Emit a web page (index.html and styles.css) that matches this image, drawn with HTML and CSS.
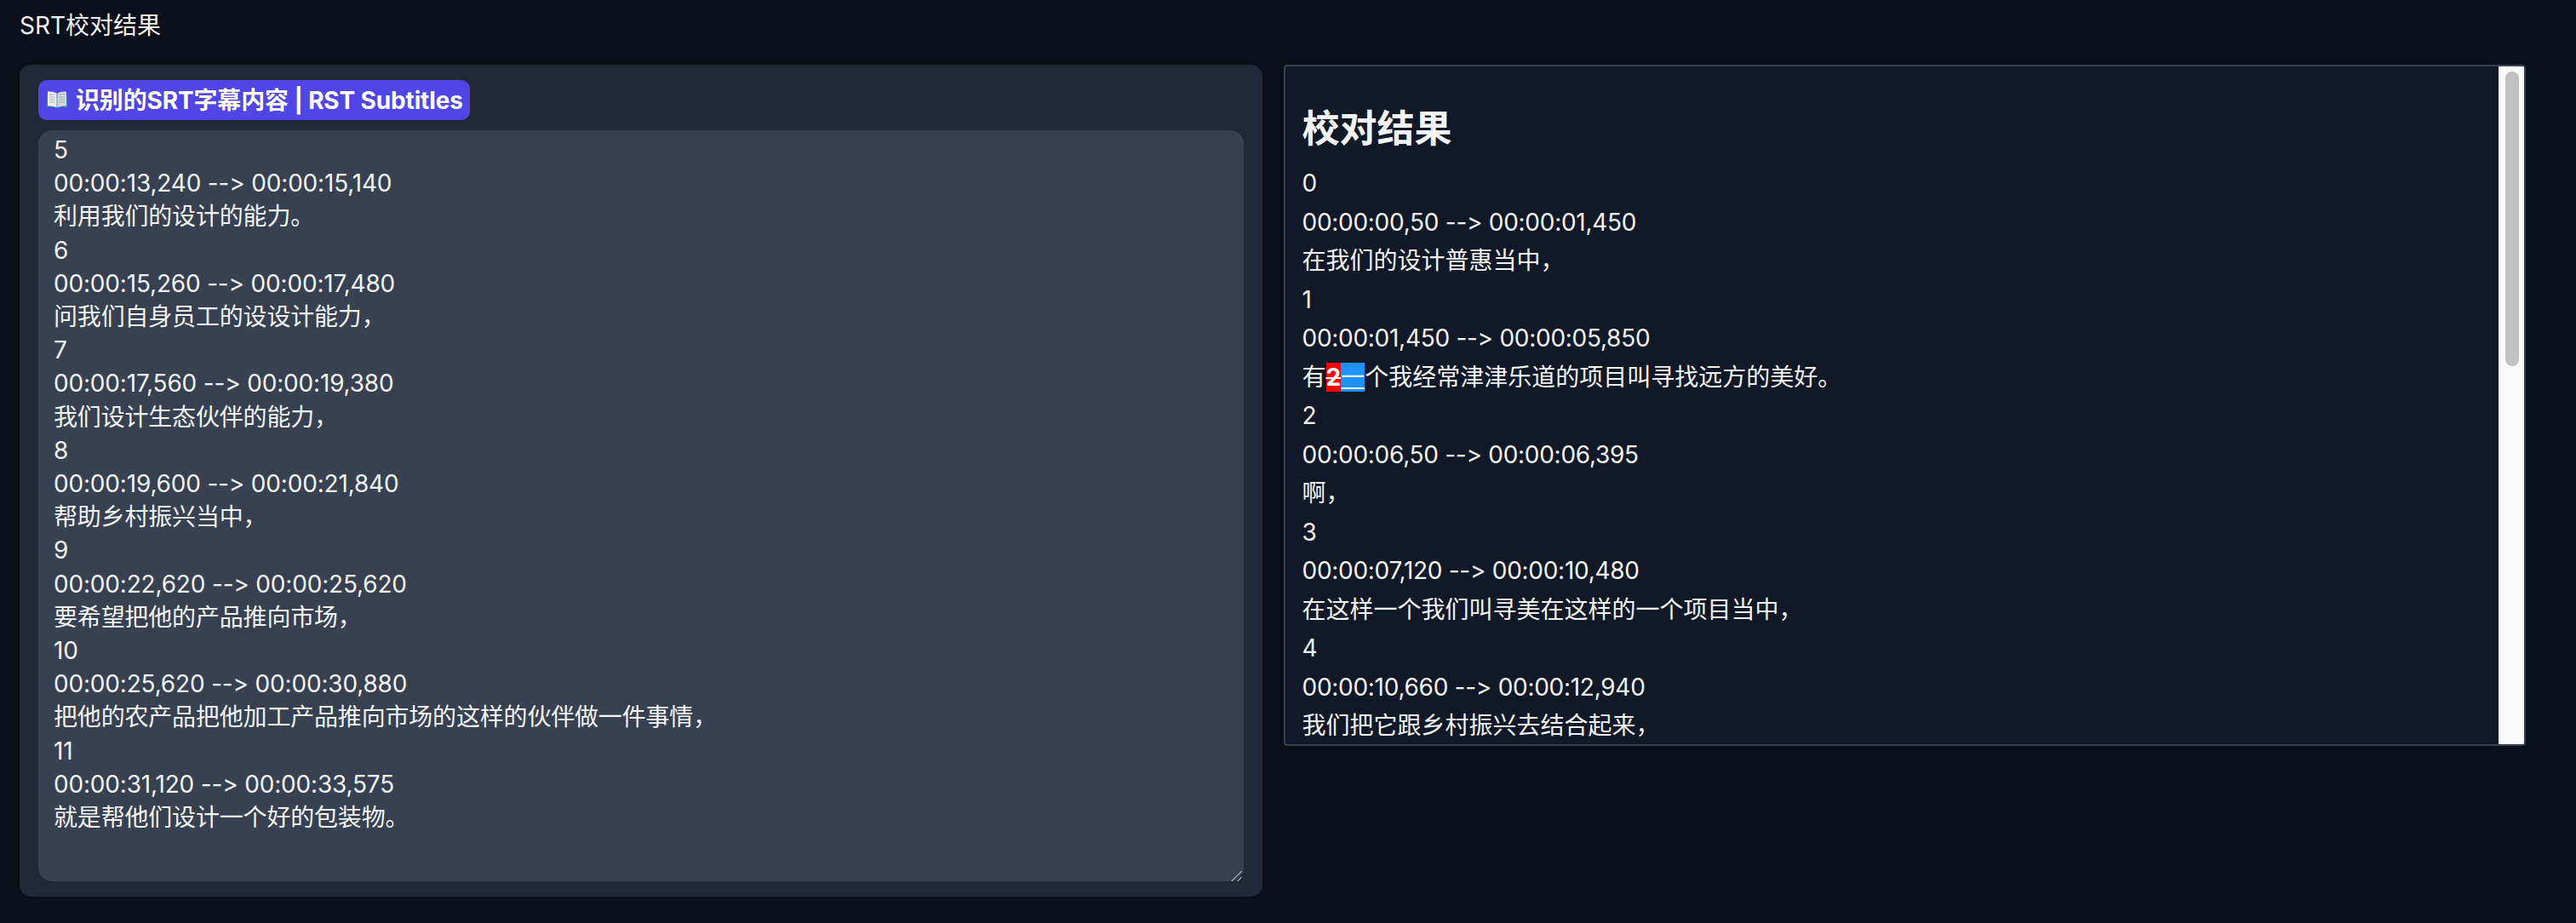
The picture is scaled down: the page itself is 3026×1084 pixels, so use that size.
FILE: index.html
```html
<!DOCTYPE html>
<html lang="zh">
<head>
  <meta charset="UTF-8">
  <title>SRT校对结果</title>
  <link rel="stylesheet" href="styles.css">
</head>
<body>
  <p class="page-title">SRT校对结果</p>

  <div class="columns">
    <div class="left-panel">
      <label class="badge" for="srt-input">
        <svg class="book" viewBox="0 0 26 21" width="26" height="21">
          <path d="M0.5 5 L13 8 L25.5 5 L25.5 19 L15 19 L13 21 L11 19 L0.5 19 Z" fill="#3a7ab0"/>
          <path d="M2 0.5 Q9 0 12.6 2.5 L12.6 19 Q9 17 2 17.5 Z" fill="#eceff2"/>
          <path d="M24 0.5 Q17 0 13.4 2.5 L13.4 19 Q17 17 24 17.5 Z" fill="#d3d8dc"/>
          <path d="M4 4 H10.5 M4 7 H10.5 M4 10 H10.5 M4 13 H10.5 M15.5 4 H22 M15.5 7 H22 M15.5 10 H22 M15.5 13 H22" stroke="#a4acb3" stroke-width="1"/>
        </svg>
        <span>识别的SRT字幕内容 | RST Subtitles</span>
      </label>
      <div class="srt-wrap">
        <textarea id="srt-input" class="srt-input" readonly spellcheck="false">5
00:00:13,240 --> 00:00:15,140
利用我们的设计的能力。
6
00:00:15,260 --> 00:00:17,480
问我们自身员工的设设计能力，
7
00:00:17,560 --> 00:00:19,380
我们设计生态伙伴的能力，
8
00:00:19,600 --> 00:00:21,840
帮助乡村振兴当中，
9
00:00:22,620 --> 00:00:25,620
要希望把他的产品推向市场，
10
00:00:25,620 --> 00:00:30,880
把他的农产品把他加工产品推向市场的这样的伙伴做一件事情，
11
00:00:31,120 --> 00:00:33,575
就是帮他们设计一个好的包装物。</textarea>
        <!-- resize grip -->
        <svg class="grip" viewBox="0 0 14 14" width="14" height="14">
          <path d="M1 13.5 L13 1.5" stroke="#1f2937" stroke-width="1"/>
          <path d="M1.7 14 L13.5 2.2" stroke="#b4b8bd" stroke-width="1.2"/>
          <path d="M8 13.5 L13 8.5" stroke="#1f2937" stroke-width="1"/>
          <path d="M8.7 14 L13.5 9.2" stroke="#b4b8bd" stroke-width="1.2"/>
        </svg>
      </div>
    </div>

    <div class="result-panel">
      <div class="result-body">
        <h2>校对结果</h2>
        <p>0</p>
        <p class="time">00:00:00,50 --&gt; 00:00:01,450</p>
        <p>在我们的设计普惠当中，</p>
        <p>1</p>
        <p class="time">00:00:01,450 --&gt; 00:00:05,850</p>
        <p>有<del class="removed">2</del><ins class="added">一</ins>个我经常津津乐道的项目叫寻找远方的美好。</p>
        <p>2</p>
        <p class="time">00:00:06,50 --&gt; 00:00:06,395</p>
        <p>啊，</p>
        <p>3</p>
        <p class="time">00:00:07,120 --&gt; 00:00:10,480</p>
        <p>在这样一个我们叫寻美在这样的一个项目当中，</p>
        <p>4</p>
        <p class="time">00:00:10,660 --&gt; 00:00:12,940</p>
        <p>我们把它跟乡村振兴去结合起来，</p>
      </div>
      <div class="scrollbar">
        <div class="scrollbar-thumb"></div>
      </div>
    </div>
  </div>
</body>
</html>
```

FILE: styles.css
```css
* {
  box-sizing: border-box;
}
html, body {
  height: 100%;
}
body {
  margin: 0;
  padding: 0 59px 0 23px;
  background-color: #0b0f19;
  color: #f3f4f6;
  font-family: Inter, "Noto Sans CJK SC", sans-serif;
  font-size: 28px;
  font-variant-ligatures: none;
  overflow: hidden;
}
.page-title {
  margin: 0;
  padding-top: 11px;
  height: 76px;
  line-height: 39px;
}
.columns {
  display: grid;
  grid-template-columns: 1fr 1fr;
  align-items: start;
  gap: 25px;
}
.left-panel {
  height: 977px;
  padding: 18px 22px;
  display: flex;
  flex-direction: column;
  gap: 12px;
  background-color: #1f2937;
  border-radius: 14px;
}
.badge {
  align-self: flex-start;
  display: flex;
  align-items: center;
  gap: 9px;
  height: 47px;
  padding: 0 8px 0 9px;
  background-color: #4f46e5;
  border-radius: 10px;
  color: #fff;
  font-weight: 700;
  letter-spacing: -0.15px;
  line-height: 47px;
}
.book {
  flex: none;
}
.badge span {
  position: relative;
  top: 1px;
}
.srt-wrap {
  flex: 1;
  position: relative;
}
.srt-input {
  display: block;
  width: 100%;
  height: 100%;
  margin: 0;
  padding: 4px 18px 0;
  background-color: #374151;
  color: #f3f4f6;
  border: none;
  border-radius: 16px;
  outline: none;
  font: inherit;
  letter-spacing: -0.18px;
  line-height: 39.2px;
  resize: none;
}
.grip {
  position: absolute;
  right: 2px;
  bottom: 0;
}
.result-panel {
  height: 800px;
  display: flex;
  background-color: #111827;
  border: 2px solid #374151;
  border-radius: 4px;
  overflow: hidden;
  line-height: 45.5px;
}
.result-body {
  flex: 1;
  padding: 0 20px;
}
.result-body h2 {
  margin: 0;
  padding-top: 43px;
  padding-bottom: 12px;
  font-size: 44px;
  font-weight: 700;
  line-height: 60px;
}
.result-body p {
  margin: 0;
}
.result-body .time {
  letter-spacing: -0.28px;
}
.removed {
  background-color: #ff0000;
  color: #fff;
  font-weight: 700;
}
.added {
  background-color: #1e90ff;
  color: #fff;
}
.scrollbar {
  flex: none;
  width: 30px;
  padding: 6px 6px 0 8px;
  background-color: #fafafa;
  border-left: 2px solid #ececec;
  border-right: 2px solid #f0f0f0;
}
.scrollbar-thumb {
  width: 16px;
  height: 346px;
  margin-left: -2px;
  background-color: #c1c1c1;
  border-radius: 8px;
}
```
